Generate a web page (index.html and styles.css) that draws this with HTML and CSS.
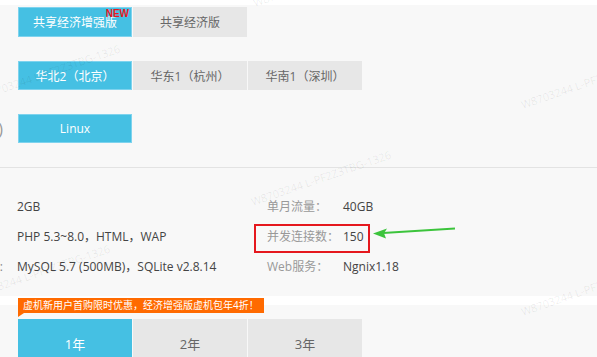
FILE: index.html
```html
<!DOCTYPE html>
<html lang="zh-CN">
<head>
<meta charset="UTF-8">
<title>虚拟主机</title>
<link rel="stylesheet" href="styles.css">
</head>
<body>
  <div class="page">
    <div class="top-strip"></div>

    <section class="config">
      <div class="opt-row first">
        <div class="cut-label"></div>
        <div class="opt-list">
          <div class="opt active">共享经济增强版<span class="new">NEW</span></div>
          <div class="opt">共享经济版</div>
        </div>
      </div>
      <div class="opt-row">
        <div class="cut-label"></div>
        <div class="opt-list">
          <div class="opt active">华北2（北京）</div>
          <div class="opt">华东1（杭州）</div>
          <div class="opt">华南1（深圳）</div>
        </div>
      </div>
      <div class="opt-row">
        <div class="cut-label paren">)</div>
        <div class="opt-list">
          <div class="opt active">Linux</div>
        </div>
      </div>
    </section>

    <section class="specs">
      <div class="spec-row">
        <div class="cut-label"></div>
        <div class="spec-val">2GB</div>
        <div class="spec-right">
          <span class="spec-name">单月流量：</span>
          <span class="spec-num">40GB</span>
        </div>
      </div>
      <div class="spec-row">
        <div class="cut-label"></div>
        <div class="spec-val">PHP 5.3~8.0，HTML，WAP</div>
        <div class="spec-right">
          <span class="spec-name">并发连接数：</span>
          <span class="spec-num">150</span>
          <div class="mark"></div>
          <svg class="arrow" width="84" height="14" viewBox="0 0 84 14">
            <line x1="10" y1="7" x2="82" y2="2.5" stroke="#3cc43c" stroke-width="2"/>
            <polygon points="0,7.5 14,2.5 11,7.3 13,12.5" fill="#3cc43c"/>
          </svg>
        </div>
      </div>
      <div class="spec-row">
        <div class="cut-label">:</div>
        <div class="spec-val">MySQL 5.7 (500MB)，SQLite v2.8.14</div>
        <div class="spec-right">
          <span class="spec-name">Web服务：</span>
          <span class="spec-num">Ngnix1.18</span>
        </div>
      </div>
    </section>

    <section class="buy">
      <div class="promo">虚机新用户首购限时优惠，经济增强版虚机包年4折！</div>
      <div class="year-tabs">
        <div class="year active">1年</div>
        <div class="year">2年</div>
        <div class="year">3年</div>
      </div>
    </section>

    <!-- watermark overlay -->
    <span class="wm" style="left:-18px;top:90px">W8703244 L-PF2Z3TBG-1326</span>
    <span class="wm" style="left:255px;top:-3px">W8703244 L-PF2Z3TBG-1326</span>
    <span class="wm" style="left:253px;top:196px">W8703244 L-PF2Z3TBG-1326</span>
    <span class="wm" style="left:523px;top:99px">W8703244 L-PF2Z3TBG-1326</span>
    <span class="wm" style="left:-28px;top:290px">W8703244 L-PF2Z3TBG-1326</span>
    <span class="wm" style="left:523px;top:306px">W8703244 L-PF2Z3TBG-1326</span>
  </div>
</body>
</html>
```

FILE: styles.css
```css
* {
  box-sizing: border-box;
}

body {
  margin: 0;
  font-family: "Open Sans", "Noto Sans CJK SC", sans-serif;
  background: #f8f8f8;
  color: #444;
  overflow: hidden;
}

.page {
  position: relative;
  width: 597px;
  height: 357px;
  overflow: hidden;
}

.top-strip {
  height: 5px;
  background: #fff;
}

/* option rows */
.config {
  padding: 2px 0 24px;
  border-bottom: 1px solid #e3e3e3;
}

.opt-row {
  display: flex;
  align-items: center;
  height: 29px;
  margin-bottom: 24px;
}

.opt-row.first {
  height: 30px;
}

.opt-row:last-child {
  margin-bottom: 0;
}

.cut-label {
  width: 3px;
  margin-right: 14px;
  flex: none;
  display: flex;
  justify-content: flex-end;
  white-space: nowrap;
  color: #888;
  font-size: 12px;
}

.cut-label.paren {
  font-size: 16px;
  color: #999;
}

.opt-list {
  display: flex;
  gap: 1px;
  height: 100%;
  margin-left: 1px;
}

.opt {
  position: relative;
  width: 114px;
  height: 100%;
  display: flex;
  align-items: center;
  justify-content: center;
  background: #e7e7e7;
  color: #666;
  font-size: 12px;
}

.opt.active {
  background: #45c0e3;
  color: #fff;
  box-shadow: inset 0 0 0 1px #7ed3ee;
}

.new {
  position: absolute;
  top: 2px;
  right: 3px;
  font: bold 10px "Liberation Sans", Arial, sans-serif;
  line-height: 1;
  color: #e8191e;
}

/* spec table */
.specs {
  padding: 24px 0 14px;
}

.spec-row {
  display: flex;
  height: 30px;
  line-height: 30px;
  font-size: 12px;
}

.spec-val {
  width: 250px;
  color: #444;
}

.spec-right {
  position: relative;
  display: flex;
}

.spec-name {
  width: 76px;
  color: #999;
}

.spec-num {
  color: #444;
}

.mark {
  position: absolute;
  left: -13px;
  top: 2px;
  width: 116px;
  height: 29px;
  border: 2px solid #e5181e;
}

.arrow {
  position: absolute;
  left: 106px;
  top: 4px;
}

/* purchase */
.buy {
  position: relative;
  border-top: 9px solid #fff;
  padding: 14px 0 0 18px;
}

.promo {
  position: absolute;
  top: -7px;
  left: 18px;
  height: 15px;
  padding: 0 5px;
  background: #ff6a00;
  color: #fff;
  font-size: 10px;
  line-height: 15px;
  white-space: nowrap;
}

.promo::after {
  content: "";
  position: absolute;
  left: 0;
  top: 100%;
  border-top: 4px solid #ff6a00;
  border-right: 6px solid transparent;
}

.year-tabs {
  display: flex;
  gap: 1px;
}

.year {
  width: 114px;
  height: 48px;
  display: flex;
  align-items: center;
  justify-content: center;
  background: #e7e7e7;
  color: #666;
  font-size: 13px;
}

.year.active {
  background: #45c0e3;
  color: #fff;
}

.wm {
  position: absolute;
  font-size: 11px;
  line-height: 11px;
  white-space: nowrap;
  color: rgba(0, 0, 0, 0.08);
  transform: rotate(-19deg);
  transform-origin: 0 100%;
  pointer-events: none;
}
```
